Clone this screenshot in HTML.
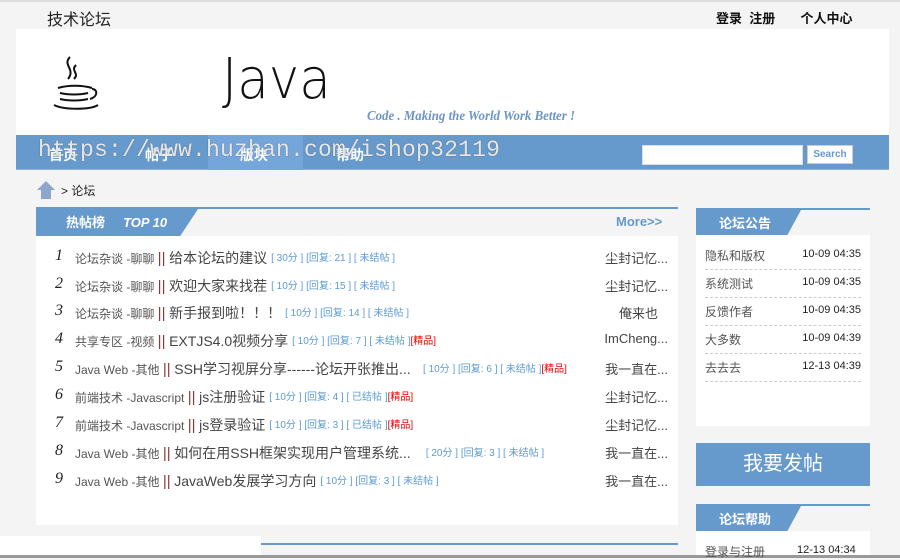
<!DOCTYPE html>
<html><head><meta charset="utf-8"><style>
*{margin:0;padding:0;box-sizing:border-box}
body{width:900px;height:558px;overflow:hidden;background:#f4f4f4;font-family:"Liberation Sans","Noto Sans CJK SC",sans-serif;position:relative;color:#333}
.a{position:absolute}
.row{position:absolute;left:0;width:642px;height:28px;font-size:13px;white-space:nowrap}
.row .n{position:absolute;left:19px;top:0;font-style:italic;font-size:16px;font-family:"Liberation Serif",serif;color:#222}
.row .t{position:absolute;left:39px;top:1px;color:#555}
.row .t small{font-size:12px;color:#555}
.row .t b{font-weight:normal;font-size:14px;color:#444}
.row .t i{font-style:normal;color:#8b3a3a;font-size:15px}
.row .t em{font-style:normal;font-size:10px;color:#5b9bd5;margin-left:4px;vertical-align:2px}
.row .t em span{color:#e00}
.row .u{position:absolute;right:10px;top:1px;font-size:13px;color:#444}
.nt{position:absolute;left:9px;width:156px;height:28px;border-bottom:1px dashed #ccc;font-size:12px;color:#555}
.nt span{position:absolute;right:0;top:6px;color:#222;font-size:11px}
.nt b{font-weight:normal;position:absolute;left:0;top:5px}
.hd{position:absolute;height:27px;background:#6699cc;color:#fff;font-weight:bold;font-size:13px;line-height:27px}
</style></head><body>
<div class="a" style="left:0;top:0;width:900px;height:2px;background:#ddd"></div>
<div class="a" style="left:47px;top:6px;font-size:16px;color:#222">技术论坛</div>
<div class="a" style="left:716px;top:8px;font-size:13px;font-weight:bold;color:#111">登录&nbsp; 注册&nbsp;&nbsp;&nbsp;&nbsp;&nbsp;&nbsp; 个人中心</div>
<div class="a" style="left:16px;top:29px;width:873px;height:106px;background:#fff"></div>
<svg class="a" style="left:50px;top:55px" width="55" height="60" viewBox="0 0 55 60"><g fill="none" stroke="#111" stroke-width="2"><path d="M20 2c-8 8 6 12-2 22M26 10c-6 6 4 8-2 14"/><path d="M8 33c10-3 24-3 34 0M10 38c8 2 20 2 28 0M10 44c8 2 20 2 28 0M42 34c6 0 6 8-2 10M4 50c10 5 36 5 44 0"/></g></svg>
<div class="a" style="left:222px;top:50px;font-size:56px;line-height:60px;font-family:'DejaVu Sans',sans-serif;font-weight:200;color:#111;transform:scaleX(0.92);transform-origin:left">Java</div>
<div class="a" style="left:367px;top:109px;font-size:14px;font-style:italic;font-weight:bold;font-family:'Liberation Serif',serif;color:#6a95c5;transform:scaleX(0.92);transform-origin:left">Code . Making the World Work Better !</div>
<div class="a" style="left:16px;top:135px;width:873px;height:35px;background:#6699cc;border-bottom:1px solid #8fb3da"></div>
<div class="a" style="left:208px;top:135px;width:95px;height:35px;background:#74a6dc"></div>
<div class="a" style="left:49px;top:145px;font-size:14px;font-weight:bold;color:#fff">首页</div>
<div class="a" style="left:145px;top:145px;font-size:14px;font-weight:bold;color:#fff">帖子</div>
<div class="a" style="left:240px;top:145px;font-size:14px;font-weight:bold;color:#fff">版块</div>
<div class="a" style="left:336px;top:145px;font-size:14px;font-weight:bold;color:#fff">帮助</div>
<div class="a" style="left:38px;top:137px;font-size:23px;font-family:'Liberation Mono',monospace;color:rgba(255,255,255,.85);text-shadow:0 0 1px #555;letter-spacing:0.2px">https://www.huzhan.com/ishop32119</div>
<div class="a" style="left:642px;top:145px;width:161px;height:20px;background:#fff;border:1px solid #ddd"></div>
<div class="a" style="left:807px;top:145px;width:46px;height:19px;background:#fff;border:1px solid #ccc;font-size:10px;color:#6699cc;font-weight:bold;text-align:center;line-height:17px">Search</div>
<svg class="a" style="left:36px;top:180px" width="20" height="20"><path d="M10 1L1 10h4v9h10v-9h4z" fill="#8ea6cc"/></svg>
<div class="a" style="left:61px;top:182px;font-size:12px;color:#222">&gt; 论坛</div>

<div class="a" style="left:36px;top:207px;width:642px;height:2px;background:#6699cc"></div>
<div class="hd" style="left:36px;top:209px;width:162px;padding-left:30px;clip-path:polygon(0 0,100% 0,89% 100%,0 100%)">热帖榜 &nbsp;&nbsp;&nbsp; <i>TOP 10</i></div>
<div class="a" style="left:616px;top:214px;font-size:13px;font-weight:bold;color:#6699cc">More&gt;&gt;</div>
<div class="a" style="left:36px;top:236px;width:642px;height:289px;background:#fff">
<div class="row" style="top:11px"><span class="n">1</span><span class="t"><small>论坛杂谈 -聊聊 </small><i>||</i> <b>给本论坛的建议</b><em>[ 30分 ] [回复: 21 ] [ 未结帖 ]</em></span><span class="u">尘封记忆...</span></div>
<div class="row" style="top:39px"><span class="n">2</span><span class="t"><small>论坛杂谈 -聊聊 </small><i>||</i> <b>欢迎大家来找茬</b><em>[ 10分 ] [回复: 15 ] [ 未结帖 ]</em></span><span class="u">尘封记忆...</span></div>
<div class="row" style="top:66px"><span class="n">3</span><span class="t"><small>论坛杂谈 -聊聊 </small><i>||</i> <b>新手报到啦！！！</b><em>[ 10分 ] [回复: 14 ] [ 未结帖 ]</em></span><span class="u" style="right:20px">俺来也</span></div>
<div class="row" style="top:94px"><span class="n">4</span><span class="t"><small>共享专区 -视频 </small><i>||</i> <b>EXTJS4.0视频分享</b><em>[ 10分 ] [回复: 7 ] [ 未结帖 ]<span>[精品]</span></em></span><span class="u">ImCheng...</span></div>
<div class="row" style="top:122px"><span class="n">5</span><span class="t"><small>Java Web -其他 </small><i>||</i> <b>SSH学习视屏分享------论坛开张推出...</b><em>&nbsp;&nbsp;&nbsp;[ 10分 ] [回复: 6 ] [ 未结帖 ]<span>[精品]</span></em></span><span class="u">我一直在...</span></div>
<div class="row" style="top:150px"><span class="n">6</span><span class="t"><small>前端技术 -Javascript </small><i>||</i> <b>js注册验证</b><em>[ 10分 ] [回复: 4 ] [ 已结帖 ]<span>[精品]</span></em></span><span class="u">尘封记忆...</span></div>
<div class="row" style="top:178px"><span class="n">7</span><span class="t"><small>前端技术 -Javascript </small><i>||</i> <b>js登录验证</b><em>[ 10分 ] [回复: 3 ] [ 已结帖 ]<span>[精品]</span></em></span><span class="u">尘封记忆...</span></div>
<div class="row" style="top:206px"><span class="n">8</span><span class="t"><small>Java Web -其他 </small><i>||</i> <b>如何在用SSH框架实现用户管理系统...</b><em>&nbsp;&nbsp;&nbsp;&nbsp;[ 20分 ] [回复: 3 ] [ 未结帖 ]</em></span><span class="u">我一直在...</span></div>
<div class="row" style="top:234px"><span class="n">9</span><span class="t"><small>Java Web -其他 </small><i>||</i> <b>JavaWeb发展学习方向</b><em>[ 10分 ] [回复: 3 ] [ 未结帖 ]</em></span><span class="u">我一直在...</span></div>
</div>
<div class="a" style="left:0;top:536px;width:261px;height:22px;background:#fff"></div>
<div class="a" style="left:261px;top:543px;width:417px;height:2px;background:#6699cc"></div>
<div class="a" style="left:0;top:555px;width:900px;height:3px;background:#999"></div>

<div class="a" style="left:696px;top:208px;width:174px;height:2px;background:#6699cc"></div>
<div class="hd" style="left:696px;top:210px;width:105px;padding-left:23px;clip-path:polygon(0 0,100% 0,86% 100%,0 100%)">论坛公告</div>
<div class="a" style="left:696px;top:235px;width:174px;height:191px;background:#fff">
<div class="nt" style="top:7px"><b>隐私和版权</b><span>10-09 04:35</span></div>
<div class="nt" style="top:35px"><b>系统测试</b><span>10-09 04:35</span></div>
<div class="nt" style="top:63px"><b>反馈作者</b><span>10-09 04:35</span></div>
<div class="nt" style="top:91px"><b>大多数</b><span>10-09 04:39</span></div>
<div class="nt" style="top:119px"><b>去去去</b><span>12-13 04:39</span></div>
</div>
<div class="a" style="left:696px;top:443px;width:174px;height:43px;background:#6699cc;color:#fff;font-size:20px;text-align:center;line-height:43px">我要发帖</div>
<div class="a" style="left:696px;top:504px;width:174px;height:2px;background:#6699cc"></div>
<div class="hd" style="left:696px;top:506px;width:105px;padding-left:23px;clip-path:polygon(0 0,100% 0,86% 100%,0 100%)">论坛帮助</div>
<div class="a" style="left:696px;top:531px;width:174px;height:24px;background:#fff"><div class="a" style="left:9px;top:12px;font-size:12px;color:#555">登录与注册</div><div class="a" style="left:101px;top:13px;font-size:11px;color:#222">12-13 04:34</div></div>
</body></html>
